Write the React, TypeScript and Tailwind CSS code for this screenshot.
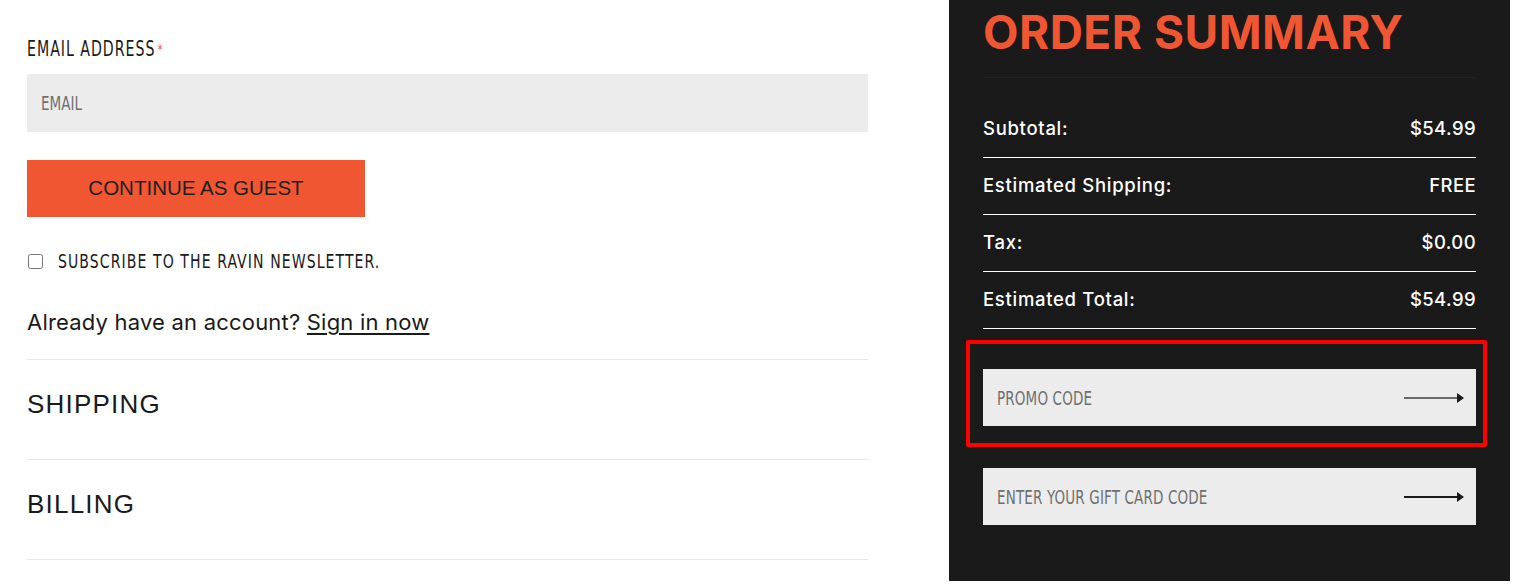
import React from 'react';

// narrow caps used by labels and code fields
const condensed = { fontFamily: '"DejaVu Sans Condensed", "DejaVu Sans", sans-serif', fontStretch: 'condensed' as const };

const ArrowIcon = ({ color = '#1a1a1a' }: { color?: string }) => (
  <svg width="60" height="12" viewBox="0 0 60 12" fill="none">
    <line x1="0" y1="6" x2="54" y2="6" stroke={color} strokeWidth="2" />
    <path d="M53 1 L60 6 L53 11 Z" fill="#1a1a1a" />
  </svg>
);

const summaryRows = [
  { label: 'Subtotal:', value: '$54.99' },
  { label: 'Estimated Shipping:', value: 'FREE' },
  { label: 'Tax:', value: '$0.00' },
  { label: 'Estimated Total:', value: '$54.99' },
];

function CodeField({ placeholder, arrowColor }: { placeholder: string; arrowColor?: string }) {
  return (
    <div className="flex items-center justify-between h-[57px] bg-[#ececec] pl-[14px] pr-[12px]">
      <div className="flex-1 overflow-hidden">
        <input
          placeholder={placeholder}
          className="w-[133%] origin-left scale-x-[0.75] bg-transparent outline-none text-[20px] text-[#333] placeholder:text-[#6f6f6f] tracking-[0.2px]"
          style={condensed}
        />
      </div>
      <button className="flex items-center">
        <ArrowIcon color={arrowColor} />
      </button>
    </div>
  );
}

export default function App() {
  return (
    <div className="flex bg-white w-[1516px] h-[587px] overflow-hidden">
      {/* checkout steps */}
      <div className="ml-[27px] w-[841px] pt-[37px]">
        <label className="block text-[21px] leading-[25px] text-[#1a1a1a]" style={condensed}>
          <span className="inline-block origin-left scale-x-[0.75] tracking-[1.3px] whitespace-nowrap">
            EMAIL ADDRESS<span className="text-[#e0475a] text-[14px] align-top ml-[3px]">*</span>
          </span>
        </label>
        <div className="mt-[12px] h-[58px] bg-[#ececec] px-[14px] flex items-center overflow-hidden">
          <input
            placeholder="EMAIL"
            className="w-[133%] shrink-0 origin-left scale-x-[0.75] bg-transparent text-[20px] outline-none placeholder:text-[#6f6f6f]"
            style={condensed}
          />
        </div>
        <button className="mt-[28px] block w-[338px] h-[57px] bg-[#ef5631] text-[20.5px] text-[#1f1f1f]" style={{ fontFamily: '"Liberation Sans", Arial, sans-serif' }}>
          CONTINUE AS GUEST
        </button>
        <label className="mt-[33px] flex items-center gap-[15px]">
          <input type="checkbox" className="ml-[1px] w-[15px] h-[15px] shrink-0" />
          <span className="inline-block origin-left scale-x-[0.78] whitespace-nowrap text-[20px] leading-[22px] tracking-[1.4px] text-[#1a1a1a]" style={condensed}>
            SUBSCRIBE TO THE RAVIN NEWSLETTER.
          </span>
        </label>
        <p className="mt-[37px] text-[22px] leading-[26px] tracking-[0.2px] text-[#1a1a1a]" style={{ fontFamily: 'Inter, sans-serif' }}>
          Already have an account? <a href="#" className="underline underline-offset-[3px]">Sign in now</a>
        </p>
        <div className="mt-[24px] border-t border-[#e8e8e8]">
          {['SHIPPING', 'BILLING'].map((step) => (
            <div key={step} className="h-[100px] pt-[29px] border-b border-[#e8e8e8]">
              <h2 className="text-[26px] leading-[30px] tracking-[1.2px] text-[#1a1a1a]" style={{ fontFamily: '"Liberation Sans", Arial, sans-serif' }}>
                {step}
              </h2>
            </div>
          ))}
        </div>
      </div>

      {/* order summary */}
      <aside className="ml-[81px] w-[561px] h-[581px] bg-[#1a1a1a] px-[34px]" style={{ fontFamily: 'Inter, sans-serif' }}>
        <div className="h-[78px] border-b border-[#222] flex items-start pt-[5px]">
          <h1 className="text-[46px] leading-[54px] font-bold tracking-[0.5px] text-[#ef5631]">ORDER SUMMARY</h1>
        </div>
        <div className="mt-[23px]">
          {summaryRows.map((row) => (
            <div key={row.label} className="h-[57px] flex items-center justify-between border-b border-white text-white text-[18.5px] font-medium tracking-[0.7px]">
              <span>{row.label}</span>
              <span className="tracking-[0.4px]">{row.value}</span>
            </div>
          ))}
        </div>
        <div className="relative mt-[40px]">
          <div className="absolute -top-[29px] -bottom-[21px] -left-[17px] -right-[11px] border-[4px] border-[#ff0000] rounded-[2px] pointer-events-none" />
          <CodeField placeholder="PROMO CODE" arrowColor="#6a6a6a" />
        </div>
        <div className="mt-[42px]">
          <CodeField placeholder="ENTER YOUR GIFT CARD CODE" />
        </div>
      </aside>
    </div>
  );
}
